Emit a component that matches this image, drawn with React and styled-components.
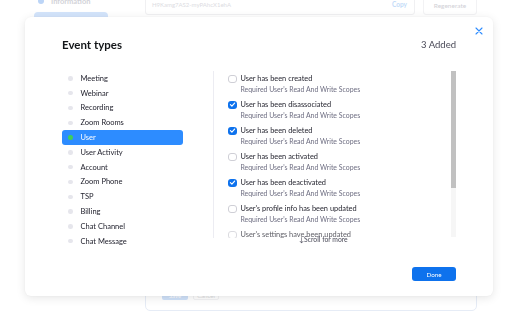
import React from "react";
import styled, { createGlobalStyle } from "styled-components";

const GlobalStyle = createGlobalStyle`
  html, body {
    margin: 0;
    padding: 0;
    background: #ffffff;
    overflow: hidden;
  }
  body {
    font-family: "Lato", "Noto Sans", sans-serif;
    -webkit-font-smoothing: antialiased;
  }
`;

const categories = [
  "Meeting",
  "Webinar",
  "Recording",
  "Zoom Rooms",
  "User",
  "User Activity",
  "Account",
  "Zoom Phone",
  "TSP",
  "Billing",
  "Chat Channel",
  "Chat Message",
];

const events = [
  { name: "User has been created", checked: false },
  { name: "User has been disassociated", checked: true },
  { name: "User has been deleted", checked: true },
  { name: "User has been activated", checked: false },
  { name: "User has been deactivated", checked: true },
  { name: "User's profile info has been updated", checked: false },
  { name: "User's settings have been updated", checked: false },
];

const App = () => {
  return (
    <>
      <GlobalStyle />
      <Backdrop>
        <Sidebar>
          <SideItem>
            <SideDot />
            Information
          </SideItem>
          <SidePill />
        </Sidebar>
        <Main>
          <KeyRow>
            <KeyInput>
              <span>H9Kamg7AS2-myPAhcX1ehA</span>
              <CopyLink>Copy</CopyLink>
            </KeyInput>
            <GhostButton>Regenerate</GhostButton>
          </KeyRow>
          <Card>
            <CardActions>
              <SaveButton>Save</SaveButton>
              <CancelButton>Cancel</CancelButton>
            </CardActions>
          </Card>
        </Main>
      </Backdrop>

      <Modal>
        <CloseButton aria-label="Close">
          <svg width="8" height="8" viewBox="0 0 8 8">
            <path d="M1 1 L7 7 M7 1 L1 7" stroke="#2D8CFF" strokeWidth="1.1" strokeLinecap="round" />
          </svg>
        </CloseButton>
        <Header>
          <Title>Event types</Title>
          <Added>3 Added</Added>
        </Header>
        <Body>
          <CategoryList>
            {categories.map(c => (
              <Category key={c} active={c === "User"}>
                <CategoryDot active={c === "User"} />
                {c}
              </Category>
            ))}
          </CategoryList>
          <EventPanel>
            <EventList>
              {events.map((e, i) => (
                <EventRow key={e.name} faded={i === events.length - 1}>
                  <Checkbox checked={e.checked}>
                    {e.checked && (
                      <svg width="7" height="7" viewBox="0 0 8 8">
                        <path d="M1.6 4.2 L3.3 5.8 L6.4 2.3" fill="none" stroke="#fff" strokeWidth="1.3" strokeLinecap="round" strokeLinejoin="round" />
                      </svg>
                    )}
                  </Checkbox>
                  <EventText>
                    <EventName>{e.name}</EventName>
                    <EventScope>Required User's Read And Write Scopes</EventScope>
                  </EventText>
                </EventRow>
              ))}
            </EventList>
            <ScrollTrack>
              <ScrollThumb />
            </ScrollTrack>
            <ScrollHint>↓Scroll for more</ScrollHint>
          </EventPanel>
        </Body>
        <Footer>
          <DoneButton>Done</DoneButton>
        </Footer>
      </Modal>
    </>
  );
};

export default App;

/* faded page behind the dialog */

const Backdrop = styled.div`
  display: flex;
  margin-top: -6px;
  height: 318px;
`;

const Sidebar = styled.div`
  width: 74px;
  margin-left: 34px;
  display: flex;
  flex-direction: column;
`;

const SideItem = styled.div`
  display: flex;
  align-items: center;
  gap: 7px;
  height: 14px;
  padding-left: 4px;
  font-size: 7.5px;
  font-weight: 700;
  color: #d2d2d8;
`;

const SideDot = styled.span`
  width: 6px;
  height: 6px;
  border-radius: 50%;
  background: #bcd5f7;
`;

const SidePill = styled.div`
  margin-top: 4px;
  height: 14px;
  border-radius: 4px;
  background: #d3e4fb;
`;

const Main = styled.div`
  margin-left: 37px;
  width: 332px;
  display: flex;
  flex-direction: column;
`;

const KeyRow = styled.div`
  display: flex;
  gap: 8px;
  height: 21px;
`;

const KeyInput = styled.div`
  width: 270px;
  box-sizing: border-box;
  border: 1px solid #f0f0f2;
  border-radius: 3px;
  display: flex;
  align-items: center;
  justify-content: space-between;
  padding: 0 7px 0 6px;
  font-size: 6px;
  color: #dcdce2;
`;

const CopyLink = styled.span`
  font-size: 6.5px;
  font-weight: 700;
  color: #c3dbf8;
`;

const GhostButton = styled.div`
  width: 54px;
  margin-top: 2px;
  box-sizing: border-box;
  border: 1px solid #f2f2f4;
  border-radius: 3px;
  display: flex;
  align-items: center;
  justify-content: center;
  font-size: 6.5px;
  color: #d0d0d6;
`;

const Card = styled.div`
  margin-top: 10px;
  height: 286px;
  box-sizing: border-box;
  border: 1px solid #e6ecf6;
  border-radius: 5px;
  display: flex;
  align-items: flex-end;
  padding: 0 0 10px 16px;
`;

const CardActions = styled.div`
  display: flex;
  gap: 5px;
`;

const SaveButton = styled.div`
  width: 26px;
  height: 10px;
  border-radius: 2px;
  background: #cfe1f9;
  color: #ffffff;
  font-size: 6px;
  display: flex;
  align-items: center;
  justify-content: center;
`;

const CancelButton = styled(SaveButton)`
  background: transparent;
  box-sizing: border-box;
  border: 1px solid #f2f2f4;
  color: #dcdce0;
`;

/* dialog */

const Modal = styled.div`
  position: fixed;
  left: 25px;
  top: 17px;
  width: 468px;
  height: 279px;
  box-sizing: border-box;
  background: #ffffff;
  border-radius: 6px;
  box-shadow: 0 2px 10px rgba(0, 0, 0, 0.1), 0 0 2px rgba(0, 0, 0, 0.05);
  padding: 19px 37px 15px 37px;
  display: flex;
  flex-direction: column;
`;

const CloseButton = styled.button`
  position: absolute;
  top: 10px;
  right: 10px;
  width: 8px;
  height: 8px;
  padding: 0;
  border: none;
  background: none;
  display: flex;
`;

const Header = styled.div`
  display: flex;
  align-items: center;
  justify-content: space-between;
  height: 16px;
`;

const Title = styled.h2`
  margin: 0;
  font-size: 11.5px;
  font-weight: 700;
  color: #131619;
`;

const Added = styled.span`
  font-size: 9.5px;
  color: #4a4a58;
`;

const Body = styled.div`
  display: flex;
  margin-top: 19px;
  height: 167px;
`;

const CategoryList = styled.ul`
  list-style: none;
  margin: 0;
  padding: 0;
  width: 121px;
  margin-right: 30px;
`;

const Category = styled.li`
  display: flex;
  align-items: center;
  gap: 8px;
  height: 14.8px;
  padding-left: 6px;
  border-radius: 3px;
  font-size: 7.5px;
  color: ${p => (p.active ? "#ffffff" : "#23232f")};
  background: ${p => (p.active ? "#2D8CFF" : "transparent")};
`;

const CategoryDot = styled.span`
  width: 4.5px;
  height: 4.5px;
  border-radius: 50%;
  background: ${p => (p.active ? "#3fce5a" : "#e6e6ec")};
`;

const EventPanel = styled.div`
  position: relative;
  flex: 1;
  display: flex;
  border-left: 1px solid #ececf2;
`;

const EventList = styled.div`
  flex: 1;
  overflow: hidden;
  padding-left: 14px;
`;

const EventRow = styled.div`
  display: flex;
  align-items: flex-start;
  gap: 4px;
  height: 26px;
  opacity: ${p => (p.faded ? 0.75 : 1)};
`;

const Checkbox = styled.span`
  flex: none;
  width: 8.5px;
  height: 8.5px;
  margin-top: 3.5px;
  box-sizing: border-box;
  border-radius: 3px;
  display: flex;
  align-items: center;
  justify-content: center;
  border: ${p => (p.checked ? "none" : "1px solid #cfcfd6")};
  background: ${p => (p.checked ? "#0E72ED" : "#ffffff")};
`;

const EventText = styled.div`
  display: flex;
  flex-direction: column;
`;

const EventName = styled.span`
  font-size: 7.4px;
  line-height: 10px;
  margin-top: 2.5px;
  color: #1f1f2a;
`;

const EventScope = styled.span`
  font-size: 6.9px;
  line-height: 10px;
  color: #6e6e82;
`;

const ScrollTrack = styled.div`
  width: 5px;
  height: 166px;
  background: #f6f6f6;
  display: flex;
  flex-direction: column;
`;

const ScrollThumb = styled.div`
  height: 117px;
  background: #c1c1c1;
`;

const ScrollHint = styled.div`
  position: absolute;
  left: 85px;
  bottom: -5px;
  font-size: 6.8px;
  color: #4a4a58;
`;

const Footer = styled.div`
  display: flex;
  justify-content: flex-end;
  margin-top: auto;
`;

const DoneButton = styled.button`
  width: 44px;
  height: 14px;
  padding: 0;
  border: none;
  border-radius: 3px;
  background: #0E72ED;
  color: #ffffff;
  font-family: "Lato", sans-serif;
  font-size: 6.3px;
`;
